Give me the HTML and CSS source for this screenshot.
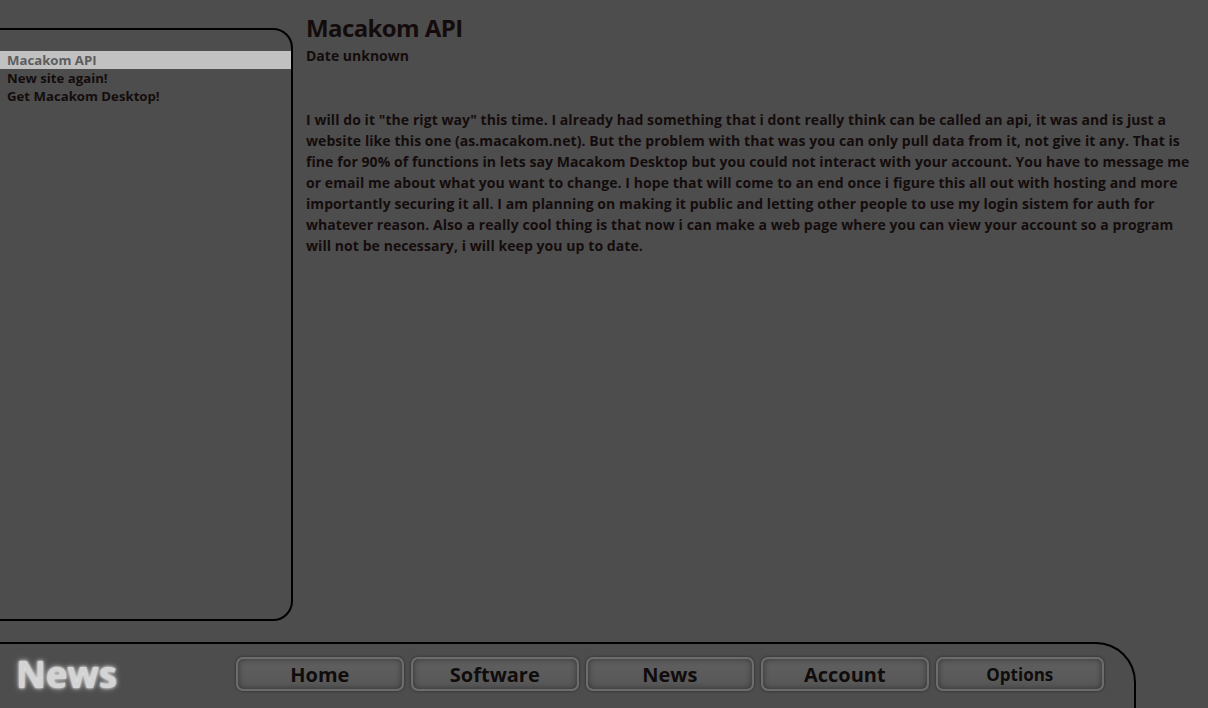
FILE: index.html
```html
<!DOCTYPE html>
<html>
<head>
<meta charset="utf-8">
<link rel="stylesheet" href="styles.css">
</head>
<body>
<div class="page">
  <div class="top">
    <aside class="sidebar">
      <ul class="list">
        <li class="item active">Macakom API</li>
        <li class="item">New site again!</li>
        <li class="item">Get Macakom Desktop!</li>
      </ul>
    </aside>
    <main class="main">
      <h1 class="title">Macakom API</h1>
      <div class="date">Date unknown</div>
      <p class="body">I will do it "the rigt way" this time. I already had something that i dont really think can be called an api, it was and is just a website like this one (as.macakom.net). But the problem with that was you can only pull data from it, not give it any. That is fine for 90% of functions in lets say Macakom Desktop but you could not interact with your account. You have to message me or email me about what you want to change. I hope that will come to an end once i figure this all out with hosting and more importantly securing it all. I am planning on making it public and letting other people to use my login sistem for auth for whatever reason. Also a really cool thing is that now i can make a web page where you can view your account so a program will not be necessary, i will keep you up to date.</p>
    </main>
  </div>
  <footer class="footer">
    <div class="brand">News</div>
    <nav class="nav">
      <a class="btn">Home</a>
      <a class="btn">Software</a>
      <a class="btn">News</a>
      <a class="btn">Account</a>
      <a class="btn btn-small">Options</a>
    </nav>
  </footer>
</div>
</body>
</html>
```
FILE: styles.css
```css
html, body {
  margin: 0;
  padding: 0;
  height: 100%;
  overflow: hidden;
}
body {
  background: #4d4d4d;
  color: #140c0c;
  font-family: "Open Sans", "Noto Sans", sans-serif;
  font-weight: 700;
}
.page {
  display: flex;
  flex-direction: column;
  height: 708px;
}
.top {
  display: flex;
  align-items: flex-start;
  height: 642px;
}
.sidebar {
  margin-left: -10px;
  margin-top: 28px;
  width: 299px;
  height: 568px;
  border: 2px solid #000;
  border-radius: 0 20px 20px 0;
  padding-top: 21px;
  box-sizing: content-box;
}
.list {
  list-style: none;
  margin: 0;
  padding: 0;
}
.item {
  height: 18px;
  line-height: 18px;
  font-size: 13.2px;
  padding-left: 15px;
}
.item.active {
  background: #c1c1c1;
  color: #5d5d5d;
}
.main {
  margin-left: 13px;
  flex: 1;
  padding-right: 12px;
}
.title {
  margin: 12px 0 0;
  font-size: 24px;
  line-height: 32px;
  letter-spacing: -0.6px;
}
.date {
  font-size: 14px;
  line-height: 20px;
  margin-top: 2px;
}
.body {
  margin: 43px 0 0;
  font-size: 14px;
  line-height: 21px;
  letter-spacing: 0.07px;
}
.footer {
  flex: 1;
  margin-left: -10px;
  width: 1142px;
  border: 2px solid #000;
  border-bottom: none;
  border-radius: 0 40px 0 0;
  display: flex;
  align-items: flex-start;
}
.brand {
  margin-left: 24px;
  margin-top: 6px;
  font-size: 37px;
  line-height: 48px;
  color: #d4d4d4;
  text-shadow: 0 0 3px #fff, 0 0 6px rgba(255,255,255,0.6);
  letter-spacing: -0.3px;
}
.nav {
  display: flex;
  gap: 7px;
  margin-left: 119px;
  margin-top: 13px;
}
.btn {
  width: 168px;
  height: 34px;
  box-sizing: border-box;
  display: flex;
  align-items: center;
  justify-content: center;
  font-size: 20px;
  color: #100c0c;
  background: linear-gradient(#5f5f5f, #575757);
  border: 2px solid #6c6c6c;
  border-radius: 7px;
  box-shadow: inset 0 0 6px rgba(0,0,0,0.45), 0 0 3px rgba(0,0,0,0.5);
}
.btn-small {
  font-size: 17px;
}
```
